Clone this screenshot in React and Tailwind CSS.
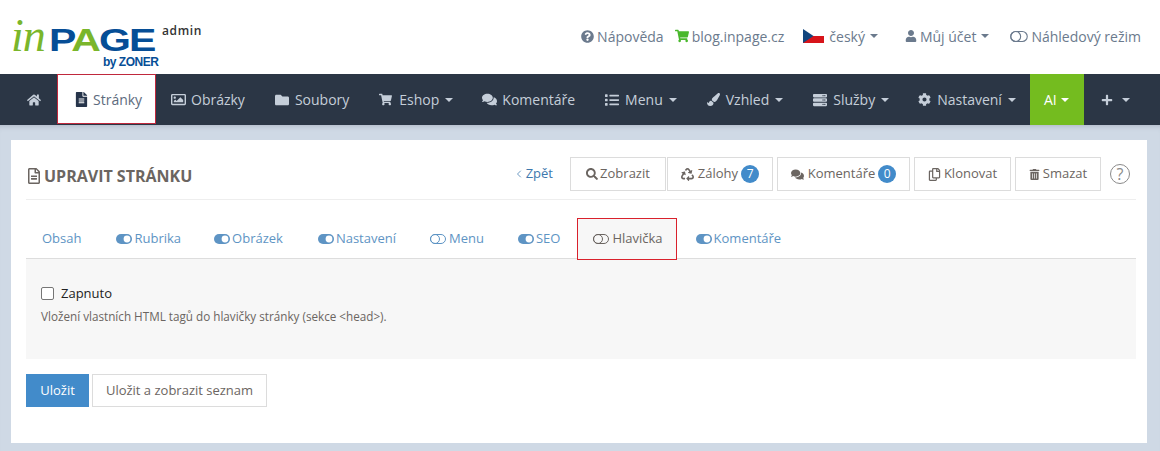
import { FaHome, FaFileAlt, FaRegImage, FaFolder, FaShoppingCart, FaComments, FaList, FaPaintBrush, FaServer, FaCog, FaPlus, FaQuestionCircle, FaUser, FaSearch, FaRecycle, FaRegCopy, FaTrashAlt, FaRegFileAlt } from 'react-icons/fa';
import { ChevronLeft } from 'lucide-react';

function Caret({ className = 'ml-[6px]' }) {
  return <span className={`inline-block border-x-[4px] border-t-[4px] border-x-transparent border-t-current ${className}`} />;
}

function ToggleOn() {
  return (
    <svg width="16" height="10" viewBox="0 0 16 10" className="mr-[2px] shrink-0">
      <rect x="0" y="0" width="16" height="10" rx="5" fill="currentColor" />
      <circle cx="11" cy="5" r="3.4" fill="#fff" />
    </svg>
  );
}

function ToggleOff({ wide }) {
  return (
    <svg width={wide ? 18 : 16} height={wide ? 11 : 10} viewBox="0 0 16 10" className="mr-[3px] shrink-0" fill="none" stroke="currentColor" strokeWidth="1">
      <rect x="0.5" y="0.5" width="15" height="9" rx="4.5" />
      <circle cx="5" cy="5" r="4.5" />
    </svg>
  );
}

function Flag() {
  return (
    <svg width="21" height="14" viewBox="0 0 21 14" className="mr-[5px]">
      <rect width="21" height="7" fill="#fff" />
      <rect y="7" width="21" height="7" fill="#d7141a" />
      <path d="M0 0 L10.5 7 L0 14 Z" fill="#11457e" />
    </svg>
  );
}

function Logo() {
  return (
    <div className="w-[152px] h-[50px] mt-[20px] ml-[11px] flex flex-col shrink-0 select-none">
      <div className="flex items-baseline h-[31px] leading-[31px]">
        <span className="text-[#7ab62b] italic text-[46px] font-['Liberation_Serif',serif] tracking-[-1px] w-[38px]">in</span>
        <span className="origin-left scale-x-[1.28] font-black text-[32px] tracking-[-1.5px] font-['Liberation_Sans',sans-serif] text-[#064e96]">
          P<span className="text-[#7ab62b]">A</span>GE
        </span>
      </div>
      <div className="text-[#064e96] font-bold text-[12px] leading-[13px] tracking-[-0.5px] mt-[5px] ml-[92px] whitespace-nowrap font-['Liberation_Sans',sans-serif]">by ZONER</div>
    </div>
  );
}

function TopLink({ icon, children, caret, className = '' }) {
  return (
    <span className={`flex items-center text-[14px] text-[#6b7a8d] ${className}`}>
      {icon}
      {children}
      {caret && <Caret className="ml-[5px]" />}
    </span>
  );
}

function NavItem({ icon, children, caret = true, pad = 'px-[15px]' }) {
  return (
    <div className={`flex items-center h-full text-[14px] text-[#c5ced9] ${pad}`}>
      {icon}
      {children && <span>{children}</span>}
      {caret && <Caret />}
    </div>
  );
}

function ActionBtn({ icon, children, badge, className = '' }) {
  return (
    <button className={`flex items-center justify-center h-[34px] border border-[#dcdcdc] bg-white text-[13px] text-[#6b6561] ${className}`}>
      {icon}
      {children}
      {badge != null && (
        <span className="ml-[3px] w-[18px] h-[18px] rounded-full bg-[#428bca] text-white text-[12px] leading-[18px] text-center">{badge}</span>
      )}
    </button>
  );
}

function Tab({ on, off, children, active, className = 'pl-[17px] pr-[17px]' }) {
  if (active) {
    return (
      <div className="flex items-center h-[42px] pl-[15px] pr-[13px] border border-[#d9212c] bg-[#f7f7f7] text-[13px] text-[#6b6561] -mb-[2px]">
        <ToggleOff />
        {children}
      </div>
    );
  }
  return (
    <div className={`flex items-center h-[42px] pt-[3px] text-[13px] text-[#5e94c4] ${className}`}>
      {on && <ToggleOn />}
      {off && <ToggleOff />}
      {children}
    </div>
  );
}

export default function App() {
  return (
    <div className="min-h-screen bg-[#cfd9e5] font-['Open_Sans',sans-serif]">
      <header className="flex bg-white h-[74px]">
        <Logo />
        <span className="text-[12px] font-semibold text-[#333] tracking-[0.6px] mt-[23px] -ml-[1px] leading-[16px]">admin</span>
        <div className="flex items-center ml-auto pr-[19px] pb-[2px]">
          <TopLink icon={<FaQuestionCircle className="mr-[3px] text-[13px]" />}>Nápověda</TopLink>
          <TopLink className="ml-[11px]" icon={<FaShoppingCart className="mr-[3px] text-[14px] text-[#49b82c]" />}>blog.inpage.cz</TopLink>
          <TopLink className="ml-[19px]" icon={<Flag />} caret>český</TopLink>
          <TopLink className="ml-[27px]" icon={<FaUser className="mr-[3px] text-[12px]" />} caret>Můj účet</TopLink>
          <TopLink className="ml-[21px]" icon={<ToggleOff wide />}>Náhledový režim</TopLink>
        </div>
      </header>

      <nav className="flex h-[51px] bg-[#2b3645] pl-[12px]">
        <NavItem caret={false} icon={<FaHome className="text-[14px] mr-[1px]" />} />
        <div className="flex items-center h-[50px] pl-[16px] bg-white border border-[#c0283c] text-[14px] text-[#5d6b7d] w-[99px]">
          <FaFileAlt className="text-[15px] mr-[4px] text-[#26344a]" />
          Stránky
        </div>
        <NavItem caret={false} icon={<FaRegImage className="text-[15px] mr-[5px]" />}>Obrázky</NavItem>
        <NavItem caret={false} icon={<FaFolder className="text-[14px] mr-[6px]" />}>Soubory</NavItem>
        <NavItem pad="pl-[15px] pr-[14px]" icon={<FaShoppingCart className="text-[13px] mr-[7px]" />}>Eshop</NavItem>
        <NavItem caret={false} icon={<FaComments className="text-[15px] mr-[5px]" />}>Komentáře</NavItem>
        <NavItem icon={<FaList className="text-[14px] mr-[6px]" />}>Menu</NavItem>
        <NavItem icon={<FaPaintBrush className="text-[13px] mr-[6px]" />}>Vzhled</NavItem>
        <NavItem icon={<FaServer className="text-[14px] mr-[6px]" />}>Služby</NavItem>
        <NavItem pad="px-[14px]" icon={<FaCog className="text-[13px] mr-[6px]" />}>Nastavení</NavItem>
        <div className="flex items-center h-full pl-[14px] pr-[15px] bg-[#74bc1f] text-white text-[14px] font-medium">
          AI
          <Caret className="ml-[4px]" />
        </div>
        <NavItem icon={<FaPlus className="text-[12px] mr-[3px]" />} pad="px-[17px]" />
      </nav>

      <main className="pt-[15px] px-[11px] pb-[8px] shadow-[inset_0_6px_6px_-6px_rgba(80,90,110,0.35)]">
        <div className="bg-white h-[303px] pl-[15px] pr-[11px] pt-[13px] mr-[2px]">
          <div className="flex items-center h-[47px] border-b border-[#eeeeee] pb-[1px]">
            <h1 className="flex items-center text-[16px] font-bold text-[#6b6561] leading-none">
              <FaRegFileAlt className="text-[16px] mr-[2px]" />
              UPRAVIT STRÁNKU
            </h1>
            <div className="flex items-center ml-auto mr-[6px] -mt-[3px]">
              <span className="flex items-center text-[13px] text-[#3d78ad] mr-[17px]">
                <ChevronLeft size={12} strokeWidth={1.5} className="mr-[1px]" />
                Zpět
              </span>
              <ActionBtn className="w-[96px]" icon={<FaSearch className="text-[12px] mr-[2px]" />}>Zobrazit</ActionBtn>
              <ActionBtn className="w-[106px] ml-[1px]" icon={<FaRecycle className="text-[13px] mr-[4px]" />} badge="7">Zálohy</ActionBtn>
              <ActionBtn className="w-[133px] ml-[4px]" icon={<FaComments className="text-[13px] mr-[4px]" />} badge="0">Komentáře</ActionBtn>
              <ActionBtn className="w-[97px] ml-[4px]" icon={<FaRegCopy className="text-[13px] mr-[3px]" />}>Klonovat</ActionBtn>
              <ActionBtn className="w-[86px] ml-[4px]" icon={<FaTrashAlt className="text-[11px] mr-[3px]" />}>Smazat</ActionBtn>
              <span className="ml-[9px] w-[20px] h-[20px] rounded-full border border-[#8a8a8a] text-[#8a8a8a] text-[16px] leading-[18px] text-center">?</span>
            </div>
          </div>

          <div className="flex items-end mt-[18px] border-b border-[#dddddd] h-[41px]">
            <Tab className="pl-[16px] pr-[18px]">Obsah</Tab>
            <Tab on className="pl-[17px] pr-[16px]">Rubrika</Tab>
            <Tab on className="pl-[17px] pr-[18px]">Obrázek</Tab>
            <Tab on>Nastavení</Tab>
            <Tab off>Menu</Tab>
            <Tab on>SEO</Tab>
            <Tab active>Hlavička</Tab>
            <Tab on className="pl-[19px] pr-[17px]">Komentáře</Tab>
          </div>

          <div className="bg-[#f7f7f7] h-[100px] pl-[15px] pt-[25px]">
            <label className="flex items-center text-[13px] text-[#222] leading-[18px]">
              <span className="w-[13px] h-[13px] border border-[#767676] rounded-[2px] bg-white mr-[7px]" />
              Zapnuto
            </label>
            <p className="mt-[6px] text-[11.7px] leading-[16px] text-[#6b6561]">Vložení vlastních HTML tagů do hlavičky stránky (sekce &lt;head&gt;).</p>
          </div>

          <div className="flex mt-[15px]">
            <button className="w-[63px] h-[33px] bg-[#428bca] text-white text-[13px]">Uložit</button>
            <button className="w-[175px] h-[33px] ml-[3px] bg-white border border-[#dcdcdc] text-[13px] text-[#6b6561]">Uložit a zobrazit seznam</button>
          </div>
        </div>
      </main>
    </div>
  );
}
